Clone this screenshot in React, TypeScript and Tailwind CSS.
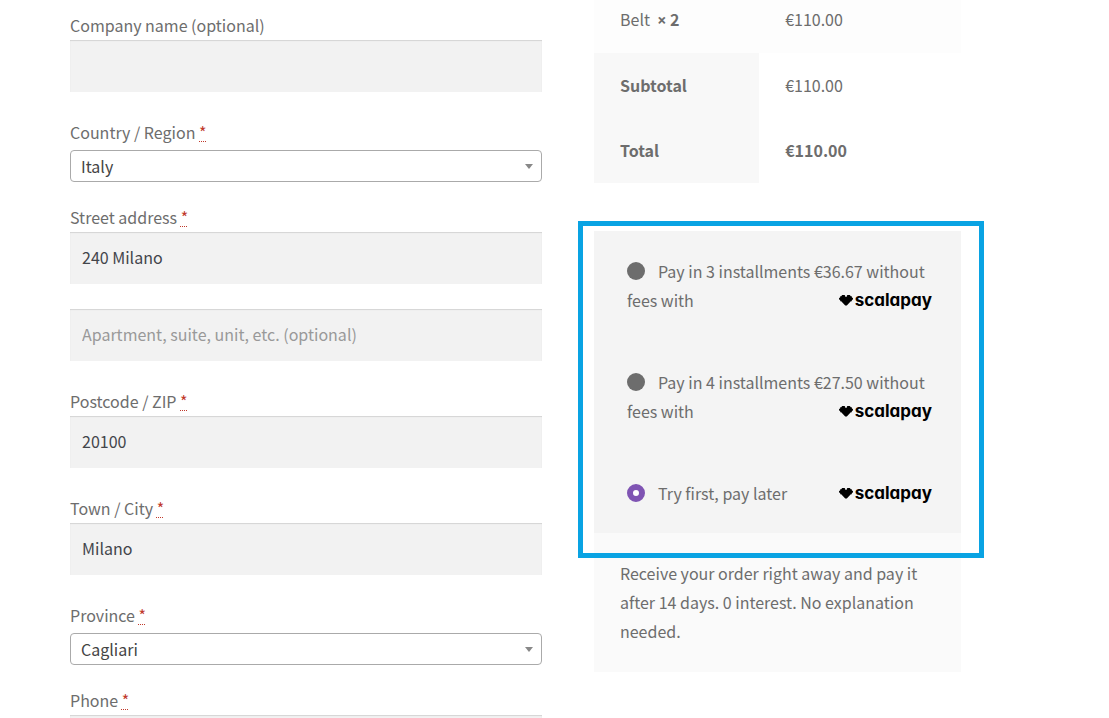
import type { ReactNode } from "react";

function Required() {
  return (
    <abbr
      title="required"
      className="text-[#c0392b] underline decoration-dotted decoration-1 underline-offset-2 [text-decoration-skip-ink:none]"
    >
      *
    </abbr>
  );
}

function FieldLabel({ id, required, children }: { id: string; required?: boolean; children: ReactNode }) {
  return (
    <label htmlFor={id} className="block">
      {children} {required && <Required />}
    </label>
  );
}

function TextInput({ id, value, placeholder, label }: { id: string; value?: string; placeholder?: string; label?: string }) {
  return (
    <input
      id={id}
      type="text"
      defaultValue={value}
      placeholder={placeholder}
      aria-label={label}
      className="block h-[52px] w-full bg-[#f2f2f2] px-3 pb-[2px] text-[#43454b] shadow-[inset_0_1px_1px_rgba(0,0,0,0.125)] outline-none placeholder:text-[#999]"
    />
  );
}

function SelectInput({ id, options }: { id: string; options: string[] }) {
  return (
    <div className="relative mt-[3px]">
      <select
        id={id}
        className="block h-8 w-full appearance-none rounded border border-[#aaa] bg-white pr-8 pl-[10px] leading-7 text-[#444] outline-none"
      >
        {options.map((option) => (
          <option key={option}>{option}</option>
        ))}
      </select>
      <svg viewBox="0 0 8 5" className="pointer-events-none absolute top-[14px] right-[9px] h-[5px] w-2" aria-hidden="true">
        <path d="M0 0h8L4 5z" fill="#888" />
      </svg>
    </div>
  );
}

function ScalapayLogo() {
  return (
    <span className="float-right flex h-[29px] items-center gap-[2px] pb-[2px] text-black">
      <svg viewBox="0 0 14 12" className="h-3 w-[14px]" aria-hidden="true">
        <path
          d="M0 4.300L1.200 3.200V2.200H2.200L3.200 1H5.600L6.400 2.200V3H7.600V2.200L8.400 1H10.800L11.800 2.200H12.800V3.200L14 4.300V5.300L12.800 6.300V7.300H11.800L7.800 11.400H6.200L2.200 7.300H1.200V6.300L0 5.300Z"
          fill="currentColor"
        />
      </svg>
      <span className="font-['Inter',sans-serif] text-[17px] leading-5 font-bold [font-feature-settings:'cv11']">scalapay</span>
    </span>
  );
}

function PaymentOption({ id, checked, children }: { id: string; checked?: boolean; children: ReactNode }) {
  return (
    <li className="pt-[26px] pr-[29px] pb-[27px] pl-[33px] last:pb-[25px]">
      <label htmlFor={id} className="flow-root">
        <input
          id={id}
          type="radio"
          name="payment"
          defaultChecked={checked}
          className="mr-[13px] inline-block size-[18px] appearance-none rounded-full bg-[#6d6d6d] align-[-2px] checked:border-[6px] checked:border-[#7f54b3] checked:bg-white"
        />
        {children}
        <ScalapayLogo />
      </label>
    </li>
  );
}

export default function App() {
  return (
    <main className="h-screen overflow-hidden bg-white font-['Noto_Sans_CJK_SC','Open_Sans',sans-serif] text-[16px] leading-[29px] text-[#6d6d6d]">
      <div className="grid grid-cols-[472fr_367fr] items-start gap-[52px] pr-[148px] pl-[70px]">
        <form className="flex flex-col gap-[26px] pt-[11px]">
          <div>
            <FieldLabel id="company">Company name (optional)</FieldLabel>
            <TextInput id="company" />
          </div>
          <div className="-mb-[5px]">
            <FieldLabel id="country" required>Country / Region</FieldLabel>
            <SelectInput id="country" options={["Italy", "France", "Spain"]} />
          </div>
          <div>
            <FieldLabel id="street" required>Street address</FieldLabel>
            <TextInput id="street" value="240 Milano" />
            <div className="mt-[25px]">
              <TextInput id="apartment" label="Apartment" placeholder="Apartment, suite, unit, etc. (optional)" />
            </div>
          </div>
          <div>
            <FieldLabel id="postcode" required>Postcode / ZIP</FieldLabel>
            <TextInput id="postcode" value="20100" />
          </div>
          <div>
            <FieldLabel id="city" required>Town / City</FieldLabel>
            <TextInput id="city" value="Milano" />
          </div>
          <div className="-mb-[5px]">
            <FieldLabel id="province" required>Province</FieldLabel>
            <SelectInput id="province" options={["Cagliari", "Milano", "Roma"]} />
          </div>
          <div>
            <FieldLabel id="phone" required>Phone</FieldLabel>
            <TextInput id="phone" />
          </div>
        </form>

        <section>
          <table className="w-full table-fixed text-left">
            <colgroup>
              <col className="w-[45%]" />
              <col />
            </colgroup>
            <tbody>
              <tr className="bg-[#fdfdfd]">
                <td className="px-[26px] pt-[5px] pb-[19px]">
                  Belt&nbsp; <strong className="font-bold"><span className="font-['Open_Sans',sans-serif] leading-5">×</span> 2</strong>
                </td>
                <td className="px-[26px] pt-[5px] pb-[19px]">€110.00</td>
              </tr>
              <tr>
                <th scope="row" className="bg-[#f8f8f8] px-[26px] py-[18px] font-bold">Subtotal</th>
                <td className="px-[26px] py-[18px]">€110.00</td>
              </tr>
              <tr>
                <th scope="row" className="bg-[#f8f8f8] px-[26px] py-[18px] font-bold">Total</th>
                <td className="px-[26px] py-[18px] font-bold">€110.00</td>
              </tr>
            </tbody>
          </table>

          <div className="relative mt-12">
            <ul className="bg-[#f4f4f4]">
              <PaymentOption id="pay-3">Pay in 3 installments €36.67 without fees with</PaymentOption>
              <PaymentOption id="pay-4">Pay in 4 installments €27.50 without fees with</PaymentOption>
              <PaymentOption id="pay-later" checked>Try first, pay later</PaymentOption>
            </ul>
            <div className="pointer-events-none absolute -top-[10px] -right-[23px] -bottom-[25px] -left-4 border-[5px] border-[#09a3e3]" />
          </div>
          <p className="bg-[#fafafa] px-[26px] py-[26px]">
            Receive your order right away and pay it after 14 days. 0 interest. No explanation needed.
          </p>
        </section>
      </div>
    </main>
  );
}
